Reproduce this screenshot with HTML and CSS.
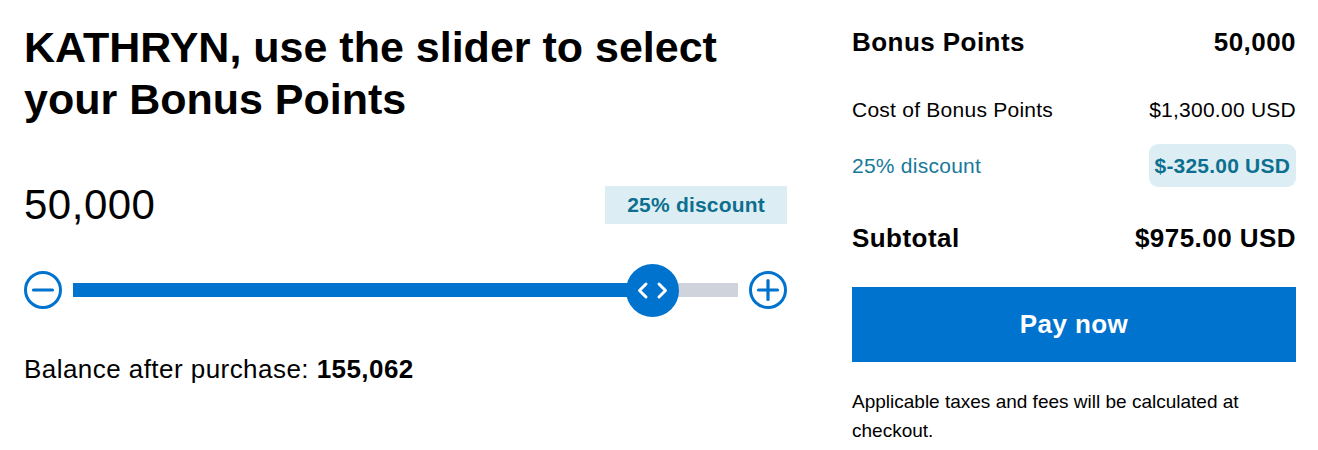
FILE: index.html
```html
<!DOCTYPE html>
<html lang="en">
<head>
<meta charset="utf-8">
<title>Bonus Points</title>
<link rel="stylesheet" href="styles.css">
</head>
<body>
<div class="page">
  <section class="picker">
    <h1 class="title">KATHRYN, use the slider to select your Bonus Points</h1>
    <div class="amount-row">
      <div class="amount">50,000</div>
      <div class="tag">25% discount</div>
    </div>
    <div class="slider">
      <button class="step" aria-label="Decrease">
        <svg width="38" height="38" viewBox="0 0 38 38"><circle cx="19" cy="19" r="17.5" fill="none" stroke="#0073cf" stroke-width="3"/><line x1="9.5" y1="19" x2="28.5" y2="19" stroke="#0073cf" stroke-width="3.2" stroke-linecap="round"/></svg>
      </button>
      <div class="track">
        <div class="fill" style="width:87.2%"></div>
        <div class="thumb" style="left:87.2%">
          <svg width="53" height="53" viewBox="0 0 53 53"><polyline points="20,20 13.5,26.5 20,33" fill="none" stroke="#fff" stroke-width="3" stroke-linecap="round" stroke-linejoin="round"/><polyline points="33,20 39.5,26.5 33,33" fill="none" stroke="#fff" stroke-width="3" stroke-linecap="round" stroke-linejoin="round"/></svg>
        </div>
      </div>
      <button class="step" aria-label="Increase">
        <svg width="38" height="38" viewBox="0 0 38 38"><circle cx="19" cy="19" r="17.5" fill="none" stroke="#0073cf" stroke-width="3"/><line x1="9.5" y1="19" x2="28.5" y2="19" stroke="#0073cf" stroke-width="3.2" stroke-linecap="round"/><line x1="19" y1="9.5" x2="19" y2="28.5" stroke="#0073cf" stroke-width="3.2" stroke-linecap="round"/></svg>
      </button>
    </div>
    <p class="balance">Balance after purchase: <strong>155,062</strong></p>
  </section>
  <aside class="summary">
    <div class="row row-head">
      <span>Bonus Points</span>
      <span>50,000</span>
    </div>
    <div class="row row-cost">
      <span>Cost of Bonus Points</span>
      <span>$1,300.00 USD</span>
    </div>
    <div class="row row-discount">
      <span>25% discount</span>
      <span class="pill">$-325.00 USD</span>
    </div>
    <div class="row row-total">
      <span>Subtotal</span>
      <span>$975.00 USD</span>
    </div>
    <button class="pay">Pay now</button>
    <p class="note">Applicable taxes and fees will be calculated at checkout.</p>
  </aside>
</div>
</body>
</html>
```

FILE: styles.css
```css
html, body {
  margin: 0;
  padding: 0;
  background: #fff;
}

body {
  font-family: "Liberation Sans", Arial, sans-serif;
  color: #000;
}

.page {
  display: flex;
  gap: 65px;
  padding: 21px 22px 0 24px;
}

.picker {
  width: 763px;
  flex: none;
  display: flex;
  flex-direction: column;
}

.title {
  margin: 0;
  font-size: 43px;
  line-height: 52px;
  font-weight: bold;
  letter-spacing: 0;
}

.amount-row {
  margin-top: 59px;
  display: flex;
  justify-content: space-between;
  align-items: center;
  height: 42px;
}

.amount {
  font-size: 42px;
  line-height: 42px;
  letter-spacing: 0.5px;
}

.tag {
  height: 38px;
  padding: 0 22px;
  display: flex;
  align-items: center;
  background: #ddedf4;
  color: #0d6f8f;
  font-size: 21px;
  font-weight: bold;
  letter-spacing: 0.2px;
}

.slider {
  margin-top: 37px;
  height: 54px;
  display: flex;
  align-items: center;
  gap: 11px;
}

.step {
  width: 38px;
  height: 38px;
  padding: 0;
  margin: 0;
  border: 0;
  background: none;
  flex: none;
  display: block;
}

.step svg {
  display: block;
}

.track {
  flex: 1;
  height: 14px;
  background: #cfd3db;
  position: relative;
}

.fill {
  height: 100%;
  background: #0073cf;
}

.thumb {
  position: absolute;
  top: -19.5px;
  width: 53px;
  height: 53px;
  margin-left: -26.5px;
  border-radius: 50%;
  background: #0073cf;
}

.thumb svg {
  display: block;
}

.balance {
  margin: 38px 0 0;
  font-size: 26px;
  line-height: 28px;
  letter-spacing: 0.45px;
}

.balance strong {
  font-weight: bold;
}

.summary {
  width: 444px;
  flex: none;
  display: flex;
  flex-direction: column;
}

.row {
  display: flex;
  justify-content: space-between;
  align-items: center;
}

.row-head {
  margin-top: 7px;
  height: 29px;
  font-size: 26px;
  font-weight: bold;
  letter-spacing: 0.45px;
}

.row-cost {
  margin-top: 41px;
  height: 24px;
  font-size: 21px;
  letter-spacing: 0.25px;
}

.row-discount {
  margin-top: 22px;
  height: 43px;
  font-size: 21px;
  color: #17789a;
  letter-spacing: 0.25px;
}

.pill {
  height: 43px;
  padding: 0 6px;
  display: flex;
  align-items: center;
  border-radius: 9px;
  background: #ddedf4;
  color: #0d6f8f;
  font-size: 21px;
  font-weight: bold;
  letter-spacing: 0.2px;
}

.row-total {
  margin-top: 37px;
  height: 29px;
  font-size: 26px;
  font-weight: bold;
  letter-spacing: 0.45px;
}

.pay {
  margin-top: 34px;
  height: 75px;
  width: 100%;
  border: 0;
  padding: 0;
  background: #0073cf;
  color: #fff;
  font-family: "Liberation Sans", Arial, sans-serif;
  font-size: 26px;
  font-weight: bold;
  letter-spacing: 0.4px;
}

.note {
  margin: 25px 0 0;
  font-size: 19px;
  line-height: 29px;
}
```
